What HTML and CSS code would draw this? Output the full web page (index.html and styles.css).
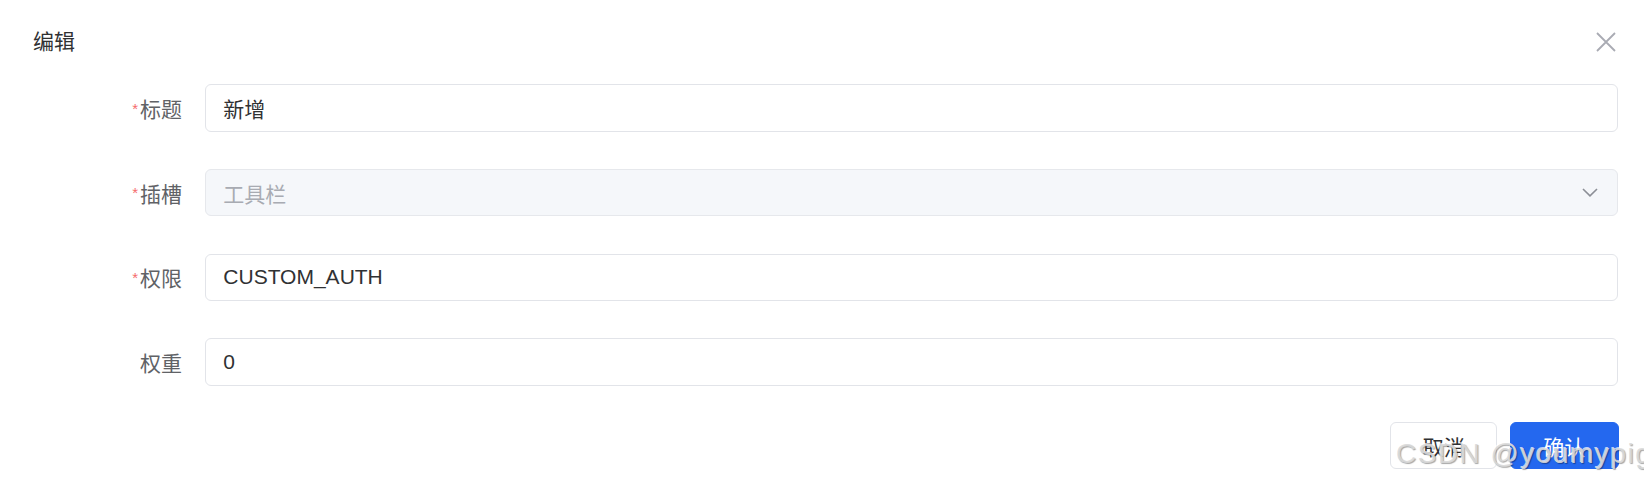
FILE: index.html
```html
<!DOCTYPE html>
<html lang="zh-CN">
<head>
<meta charset="utf-8">
<title>编辑</title>
<link rel="stylesheet" href="styles.css">
</head>
<body>
<div class="dialog">
  <header class="dialog-header">
    <span class="dialog-title">编辑</span>
    <button class="close-btn" aria-label="关闭">
      <svg width="20" height="20" viewBox="0 0 20 20"><path d="M1 1 L19 19 M19 1 L1 19" stroke="#a9abb3" stroke-width="1.8" fill="none"/></svg>
    </button>
  </header>
  <form class="form">
    <label class="form-label"><span class="req">*</span>标题</label>
    <div class="input"><span class="value">新增</span></div>

    <label class="form-label"><span class="req">*</span>插槽</label>
    <div class="input select disabled"><span class="value">工具栏</span>
      <svg class="chevron" width="16" height="9" viewBox="0 0 16 9"><path d="M1 1 L8 7.8 L15 1" stroke="#8c8f96" stroke-width="1.6" fill="none"/></svg>
    </div>

    <label class="form-label"><span class="req">*</span>权限</label>
    <div class="input"><span class="value">CUSTOM_AUTH</span></div>

    <label class="form-label">权重</label>
    <div class="input"><span class="value">0</span></div>
  </form>
  <footer class="dialog-footer">
    <button class="btn btn-cancel" type="button">取消</button>
    <button class="btn btn-primary" type="button">确认</button>
  </footer>
</div>
<div class="watermark">CSDN @youmypig</div>
</body>
</html>
```

FILE: styles.css
```css
html, body {
  margin: 0;
  padding: 0;
  background: #ffffff;
}
body {
  font-family: "Liberation Sans", "Noto Sans CJK SC", sans-serif;
  font-size: 21px;
  color: #303133;
  position: relative;
  width: 1644px;
  height: 483px;
  overflow: hidden;
}
.dialog {
  padding: 27px 26px 0 33px;
}
.dialog-header {
  display: flex;
  align-items: center;
  justify-content: space-between;
  height: 30px;
}
.dialog-title {
  font-size: 21px;
  line-height: 30px;
  color: #303133;
}
.close-btn {
  border: 0;
  background: transparent;
  padding: 0;
  margin-right: 2px;
  width: 20px;
  height: 20px;
  display: flex;
}
.form {
  display: grid;
  grid-template-columns: 149px 1fr;
  column-gap: 23.33px;
  row-gap: 37.33px;
  margin-top: 27.33px;
}
.form-label {
  display: flex;
  align-items: center;
  justify-content: flex-end;
  height: 47.33px;
  color: #606266;
  font-size: 21px;
}
.req {
  align-self: flex-start;
  margin-top: 16.5px;
  margin-right: 2px;
  font-size: 15px;
  line-height: 15px;
  color: #f56c6c;
}
.input {
  box-sizing: border-box;
  height: 47.33px;
  border: 1px solid #e2e4e9;
  border-radius: 6px;
  background: #ffffff;
  padding: 0 17px;
  display: flex;
  align-items: center;
  color: #303133;
  font-size: 21px;
}
.input.disabled {
  background: #f5f7fa;
  border-color: #e6e8ec;
  color: #a8abb2;
}
.select {
  justify-content: space-between;
  padding-right: 19px;
}
.chevron {
  display: block;
}
.dialog-footer {
  display: flex;
  justify-content: flex-end;
  gap: 12.67px;
  margin-top: 36.67px;
  margin-right: -1px;
}
.btn {
  box-sizing: border-box;
  height: 47px;
  border-radius: 6px;
  font-family: "Liberation Sans", "Noto Sans CJK SC", sans-serif;
  font-size: 21px;
  padding: 0;
  display: flex;
  align-items: center;
  justify-content: center;
}
.btn-cancel {
  width: 106.67px;
  background: #ffffff;
  border: 1px solid #e2e4e9;
  color: #303133;
}
.btn-primary {
  width: 109.33px;
  background: #2468ef;
  border: 1px solid #2468ef;
  color: #ffffff;
}
.watermark {
  position: absolute;
  left: 1396px;
  top: 437.6px;
  font-family: "Liberation Sans", sans-serif;
  font-size: 28px;
  line-height: 32px;
  letter-spacing: 1.5px;
  white-space: nowrap;
  color: rgba(218, 218, 218, 0.9);
  text-shadow: 1px 1px 1px rgba(0, 0, 0, 0.35), -1px -1px 0 rgba(255, 255, 255, 0.7);
}
```
